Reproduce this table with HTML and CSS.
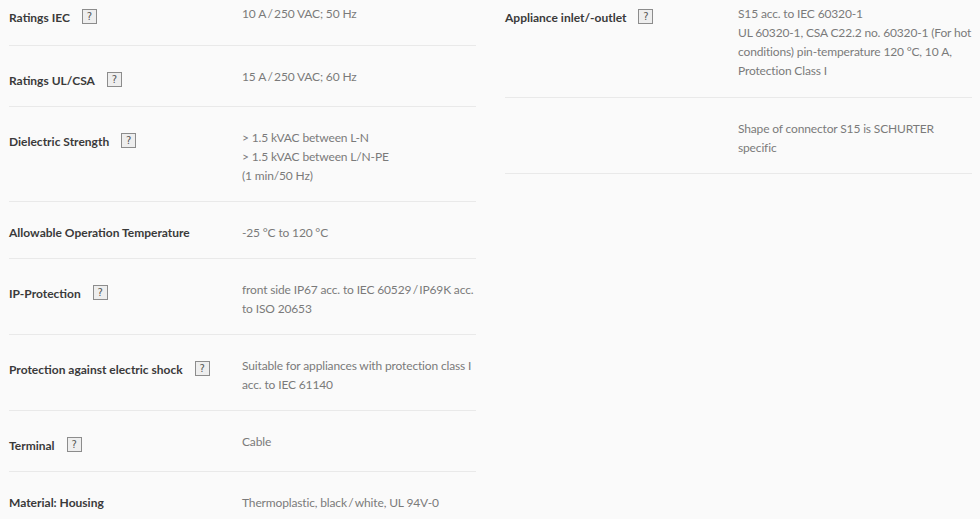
FILE: index.html
```html
<!DOCTYPE html>
<html lang="en">
<head>
<meta charset="utf-8">
<title>Specifications</title>
<link rel="stylesheet" href="styles.css">
</head>
<body>
<div class="specs">
  <div class="table">
    <div class="row">
      <div class="label help-row"><span class="name">Ratings IEC</span><span class="help">?</span></div>
      <div class="value">10 A&#8201;/&#8201;250 VAC; 50 Hz</div>
    </div>
    <div class="row">
      <div class="label help-row"><span class="name">Ratings UL/CSA</span><span class="help">?</span></div>
      <div class="value">15 A&#8201;/&#8201;250 VAC; 60 Hz</div>
    </div>
    <div class="row">
      <div class="label help-row"><span class="name">Dielectric Strength</span><span class="help">?</span></div>
      <div class="value">&gt; 1.5 kVAC between L-N<br>&gt; 1.5 kVAC between L/N-PE<br>(1 min/50 Hz)</div>
    </div>
    <div class="row">
      <div class="label"><span class="name">Allowable Operation Temperature</span></div>
      <div class="value">-25&#8239;°C to 120&#8239;°C</div>
    </div>
    <div class="row">
      <div class="label help-row"><span class="name">IP-Protection</span><span class="help">?</span></div>
      <div class="value">front side IP67 acc. to IEC 60529&#8201;/&#8201;IP69K acc. to ISO 20653</div>
    </div>
    <div class="row">
      <div class="label help-row"><span class="name">Protection against electric shock</span><span class="help">?</span></div>
      <div class="value">Suitable for appliances with protection class&nbsp;I acc. to IEC 61140</div>
    </div>
    <div class="row">
      <div class="label help-row"><span class="name">Terminal</span><span class="help">?</span></div>
      <div class="value">Cable</div>
    </div>
    <div class="row">
      <div class="label"><span class="name">Material: Housing</span></div>
      <div class="value">Thermoplastic, black&#8201;/&#8201;white, UL 94V-0</div>
    </div>
  </div>
  <div class="table">
    <div class="row">
      <div class="label help-row"><span class="name">Appliance inlet/-outlet</span><span class="help">?</span></div>
      <div class="value">S15 acc. to IEC 60320-1<br>UL 60320-1, CSA C22.2 no. 60320-1 (For hot conditions) pin-temperature 120&#8239;°C, 10&#8239;A, Protection Class I</div>
    </div>
    <div class="row">
      <div class="label"></div>
      <div class="value">Shape of connector S15 is SCHURTER specific</div>
    </div>
  </div>
</div>
</body>
</html>
```
FILE: styles.css
```css
html, body {
  margin: 0;
  padding: 0;
  background: #fafafa;
}
body {
  font-family: Lato, "Open Sans", sans-serif;
  font-size: 12px;
  line-height: 19px;
  color: #7a7a7a;
}
.specs {
  display: grid;
  grid-template-columns: 467px 467px;
  column-gap: 29px;
  padding: 0 8px 0 9px;
  align-items: start;
}
.row {
  display: grid;
  grid-template-columns: 233px 1fr;
  align-items: start;
  padding: 21px 0 16px;
  border-bottom: 1px solid #e9e9e9;
}
.row:first-child {
  padding-top: 4px;
  padding-bottom: 18px;
}
.table:last-child .row:first-child {
  padding-bottom: 17px;
}
.table:first-child .row:last-child {
  border-bottom: none;
}
.label {
  display: flex;
  align-items: flex-end;
  color: #3a3a3a;
  font-weight: 700;
  padding-right: 10px;
}
.label.help-row {
  min-height: 23px;
}
.name {
  display: block;
}
.help {
  box-sizing: border-box;
  width: 15px;
  height: 15px;
  margin: 0 0 3px 12px;
  border: 1px solid #8c8c8c;
  background: #eeeeee;
  color: #555;
  font-family: "DejaVu Sans", sans-serif;
  font-weight: normal;
  font-size: 10px;
  line-height: 13px;
  text-align: center;
}
.value {
  letter-spacing: -0.15px;
}
```
